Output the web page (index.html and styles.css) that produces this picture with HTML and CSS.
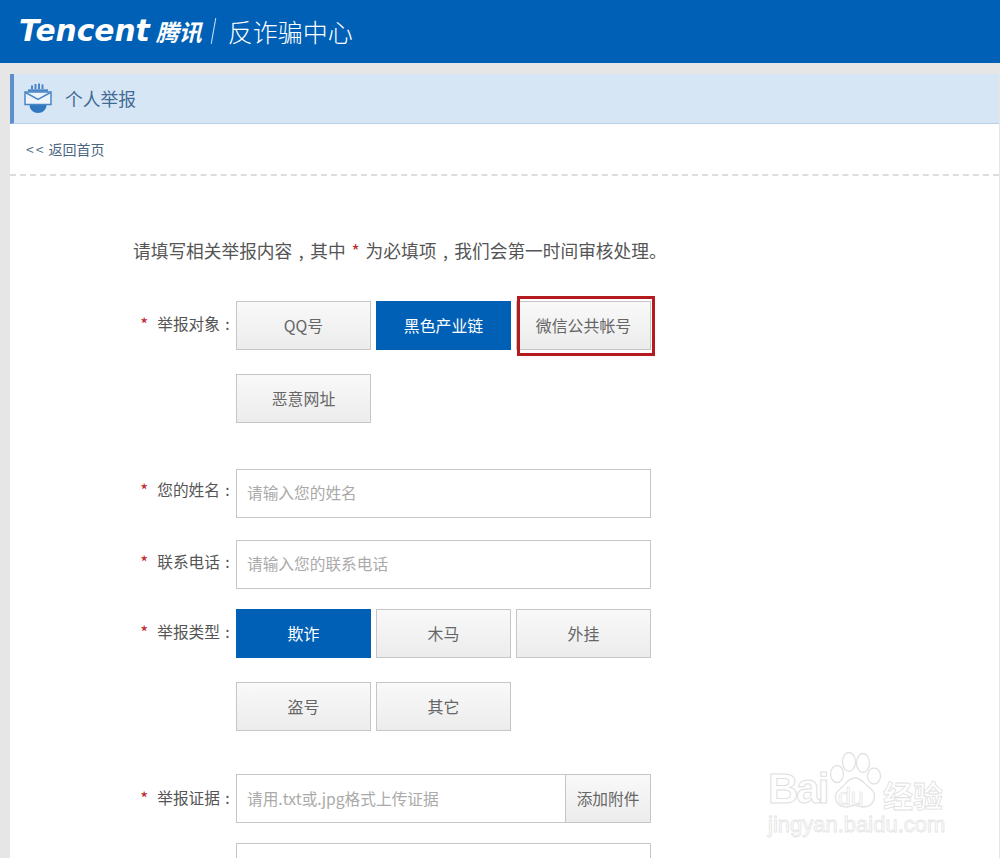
FILE: index.html
```html
<!DOCTYPE html>
<html lang="zh-CN">
<head>
<meta charset="utf-8">
<title>个人举报</title>
<link rel="stylesheet" href="styles.css">
</head>
<body>
<header class="topbar">
  <span class="brand">Tencent</span>
  <span class="brand-cn">腾讯</span>
  <span class="brand-div"></span>
  <span class="brand-sub">反诈骗中心</span>
</header>
<main class="panel">
  <div class="panel-title">
    <svg class="panel-icon" viewBox="0 0 28 32" width="28" height="32">
      <path d="M8 7V3.500M11.500 7V2M15 7V1.500M18.500 7V2.500" stroke="#4a86c5" stroke-width="2" fill="none"/>
      <path d="M4 8.500H24" stroke="#4a86c5" stroke-width="2.400" fill="none"/>
      <path d="M5.500 22.500C5.500 28 9.500 31 14 31S22.500 28 22.500 22.500L22.500 21H5.500Z" fill="#2f78bf"/>
      <path d="M1 10H27V22.500H1Z" fill="#eef4fb" stroke="#4a86c5" stroke-width="1.500"/>
      <path d="M1.500 10.500L14 17.500L26.500 10.500" fill="none" stroke="#4a86c5" stroke-width="1.500"/>
    </svg>
    <span>个人举报</span>
  </div>
  <nav class="crumb"><a href="#"><span class="crumb-arrows">&lt;&lt;</span>返回首页</a></nav>
  <form class="form">
    <p class="intro">请填写相关举报内容<span class="cm">,</span>其中<em>*</em>为必填项<span class="cm">,</span>我们会第一时间审核处理。</p>

    <div class="row row-target">
      <label class="lbl"><em>*</em>举报对象<span class="colon">:</span></label>
      <div class="opts">
        <button type="button" class="opt">QQ号</button>
        <button type="button" class="opt on">黑色产业链</button>
        <div class="marked"><button type="button" class="opt">微信公共帐号</button><span class="redbox"></span></div>
        <button type="button" class="opt">恶意网址</button>
      </div>
    </div>

    <div class="row row-name">
      <label class="lbl"><em>*</em>您的姓名<span class="colon">:</span></label>
      <div class="field">请输入您的姓名</div>
    </div>
    <div class="row row-phone">
      <label class="lbl"><em>*</em>联系电话<span class="colon">:</span></label>
      <div class="field">请输入您的联系电话</div>
    </div>

    <div class="row row-type">
      <label class="lbl"><em>*</em>举报类型<span class="colon">:</span></label>
      <div class="opts">
        <button type="button" class="opt on">欺诈</button>
        <button type="button" class="opt">木马</button>
        <button type="button" class="opt">外挂</button>
        <button type="button" class="opt">盗号</button>
        <button type="button" class="opt">其它</button>
      </div>
    </div>

    <div class="row row-proof">
      <label class="lbl"><em>*</em>举报证据<span class="colon">:</span></label>
      <div class="field field-upload">
        <span class="hint">请用.txt或.jpg格式上传证据</span>
        <span class="addon">添加附件</span>
      </div>
    </div>
    <div class="row row-more">
      <span class="lbl"></span>
      <div class="field field-tall"></div>
    </div>
  </form>
</main>
<aside class="mark">
  <div class="mark-top">
    <span class="mark-bai">Bai</span>
    <svg class="mark-paw" viewBox="0 0 54 58" width="54" height="58">
      <g fill="#fff" stroke="#e2e2e2" stroke-width="1.300">
        <ellipse cx="21" cy="11" rx="6.500" ry="9.500"/>
        <ellipse cx="35" cy="12" rx="6.500" ry="9.500"/>
        <ellipse cx="9" cy="23" rx="6.500" ry="8.500"/>
        <ellipse cx="46" cy="25" rx="6.500" ry="8"/>
        <path d="M27 27C34 27 36 33 42 37C50 43 47 56 35 56C31 56 30 54 27 54S23 56 19 56C7 56 4 44 12 38C18 33 20 27 27 27Z"/>
      </g>
    </svg>
    <span class="mark-du">du</span>
    <span class="mark-cn">经验</span>
  </div>
  <div class="mark-url">jingyan.baidu.com</div>
</aside>
</body>
</html>
```
FILE: styles.css
```css
* { box-sizing: border-box; }
html, body { height: 858px; overflow: hidden; }
body {
  margin: 0;
  background: #e6e6e6;
  font-family: "Noto Sans CJK SC", "Liberation Sans", sans-serif;
  color: #555;
  position: relative;
}
em { font-style: normal; color: #c0272d; }

.topbar {
  height: 63px;
  background: #0060b6;
  color: #fff;
  display: flex;
  align-items: center;
  padding: 0 0 1px 19px;
}
.brand {
  font: italic bold 29.700px/1 "DejaVu Sans", sans-serif;
  letter-spacing: 0;
}
.brand-cn {
  font-size: 23px;
  font-weight: 700;
  font-style: italic;
  margin-left: 6px;
  line-height: 1;
}
.brand-div {
  width: 1px;
  height: 26px;
  background: #cfe0f2;
  margin: 0 14px 0 11px;
  transform: rotate(10deg);
}
.brand-sub { font-size: 25px; font-weight: 300; line-height: 1; }

.panel {
  margin: 11px 1px 0 10px;
  background: #fff;
  height: 784px;
  overflow: hidden;
}
.panel-title {
  height: 50px;
  background: #d7e6f5;
  border-left: 4px solid #5d8fc9;
  border-bottom: 1px solid #b7d0ee;
  display: flex;
  align-items: center;
  padding: 0 0 1px 10px;
  font-size: 17.800px;
  color: #3f6b95;
}
.panel-icon { margin-right: 13px; }
.crumb {
  height: 52px;
  padding: 15px 0 0 16px;
  border-bottom: 2px dashed #ddd;
  font-size: 14px;
  line-height: 20px;
}
.crumb a { color: #4a6784; text-decoration: none; }
.crumb-arrows { letter-spacing: 2px; margin-right: 3px; }

.form { padding: 0 0 0 124px; }
.intro {
  margin: 0 0 0 -1px;
  padding-top: 61px;
  height: 125px;
  font-size: 17.700px;
  line-height: 26px;
  color: #555;
  white-space: nowrap;
}
.intro em { display: inline-block; width: 20px; text-align: center; }
.cm { display: inline-block; width: 18px; text-align: center; }

.row { display: flex; align-items: flex-start; }
.lbl {
  width: 102px;
  flex: none;
  height: 49px;
  display: flex;
  align-items: center;
  justify-content: flex-end;
  padding: 0 1px 4px 0;
  font-size: 15.700px;
  white-space: nowrap;
  color: #555;
}
.lbl em { margin-right: 9px; font-size: 17px; }
.colon { width: 15px; text-align: center; }
.row-name .lbl { padding-bottom: 8px; }
.row-phone .lbl { padding-bottom: 6px; }
.row-proof .lbl { padding-bottom: 2px; }

.opts {
  width: 415px;
  display: flex;
  flex-wrap: wrap;
  column-gap: 5px;
  row-gap: 24px;
}
.opt {
  width: 135px;
  height: 49px;
  padding: 0 0 1px;
  border: 1px solid #c6c6c6;
  background: linear-gradient(#f9f9f9, #ececec);
  font: 15.900px "Noto Sans CJK SC", sans-serif;
  color: #666;
}
.opt.on {
  background: #0060b6;
  border-color: #0060b6;
  color: #fff;
}
.marked { position: relative; width: 135px; height: 49px; }
.redbox {
  position: absolute;
  left: 1px;
  top: -5px;
  width: 138px;
  height: 60px;
  border: 3px solid #b31b1e;
}

.row-name { margin-top: 46px; }
.row-phone { margin-top: 22px; }
.row-type { margin-top: 20px; }
.row-proof { margin-top: 43px; }
.row-more { margin-top: 20px; }

.field {
  width: 415px;
  height: 49px;
  border: 1px solid #c6c6c6;
  background: #fff;
  display: flex;
  align-items: center;
  padding: 0 0 3px 10px;
  font-size: 15.700px;
  color: #aaa;
}
.field-upload { justify-content: space-between; padding: 0 0 0 10px; }
.addon {
  width: 85px;
  height: 47px;
  border-left: 1px solid #c6c6c6;
  background: linear-gradient(#f9f9f9, #ececec);
  color: #666;
  display: flex;
  align-items: center;
  justify-content: center;
}
.field-tall { height: 120px; }

.mark {
  position: absolute;
  left: 768px;
  top: 751px;
  width: 190px;
  color: #fff;
  -webkit-text-stroke: 1px #e0e0e0;
}
.mark-top { display: flex; align-items: flex-end; position: relative; height: 58px; }
.mark-bai {
  font: bold 42px/42px "Liberation Sans", sans-serif;
  letter-spacing: -2px;
  width: 60px;
  flex: none;
  margin-bottom: -1px;
}
.mark-paw { flex: none; }
.mark-du {
  position: absolute;
  left: 70px;
  top: 34px;
  font: 23px/24px "Liberation Sans", sans-serif;
  -webkit-text-stroke: .6px #e0e0e0;
}
.mark-cn {
  flex: none;
  font-size: 30px;
  line-height: 34px;
  font-weight: 700;
  white-space: nowrap;
  margin-left: 1px;
  margin-bottom: -2px;
  -webkit-text-stroke: .8px #e0e0e0;
}
.mark-url {
  font: 22px/24px "Liberation Sans", sans-serif;
  margin-top: 4px;
  -webkit-text-stroke: .8px #e4e4e4;
  white-space: nowrap;
}
```
